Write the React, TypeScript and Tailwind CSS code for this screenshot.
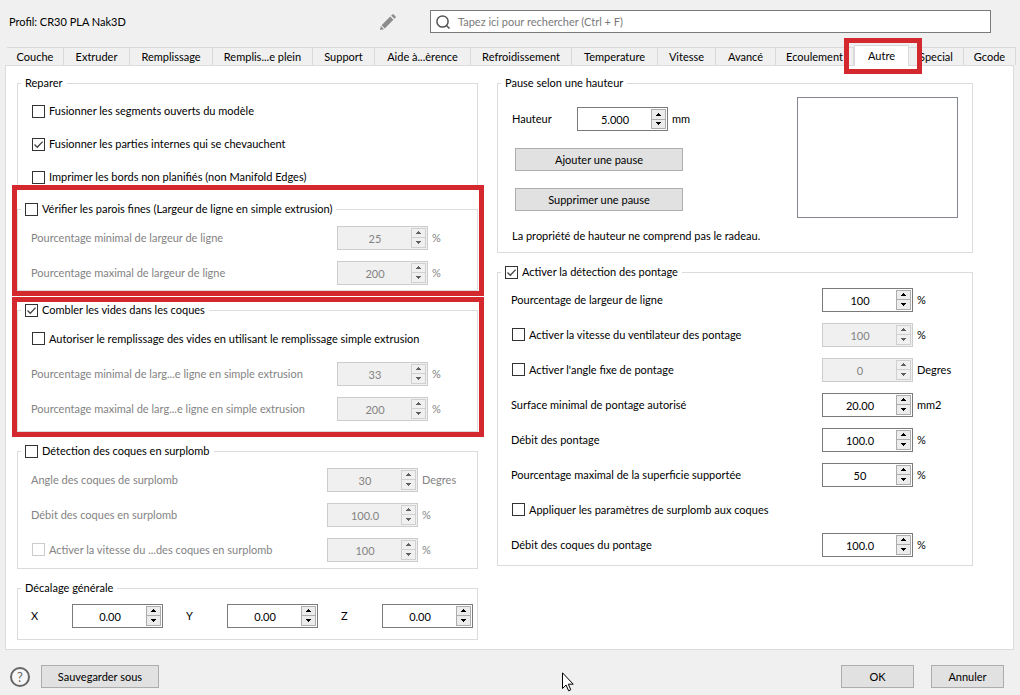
import React, { useState } from 'react';

interface SpinBoxProps {
  label: string;
  value: string;
  disabled?: boolean;
}

interface CheckProps {
  label: string;
  checked?: boolean;
  disabled?: boolean;
}

interface GroupProps {
  title: React.ReactNode;
  className?: string;
  children: React.ReactNode;
}

interface RowProps {
  label: string;
  value: string;
  unit: string;
  unitClass: string;
  check?: boolean;
  disabled?: boolean;
  boxDisabled?: boolean;
}

const TABS = [
  { name: 'Couche', width: 'w-[57px]' },
  { name: 'Extruder', width: 'w-[66px]' },
  { name: 'Remplissage', width: 'w-[83px]' },
  { name: 'Remplis...e plein', width: 'w-[100px]' },
  { name: 'Support', width: 'w-[62px]' },
  { name: 'Aide à...èrence', width: 'w-[96px]' },
  { name: 'Refroidissement', width: 'w-[101px]' },
  { name: 'Temperature', width: 'w-[86px]' },
  { name: 'Vitesse', width: 'w-[58px]' },
  { name: 'Avancé', width: 'w-[60px]' },
  { name: 'Ecoulement', width: 'w-[78px]' },
  { name: 'Autre', width: 'w-[55px]' },
  { name: 'Special', width: 'w-[55px]' },
  { name: 'Gcode', width: 'w-[52px]' },
];

const SpinBox: React.FC<SpinBoxProps> = ({ label, value, disabled }) => {
  const [text, setText] = useState(value);
  const decimals = value.includes('.') ? value.split('.')[1].length : 0;

  const step = (delta: number) => setText((parseFloat(text) + delta).toFixed(decimals));

  const frame = disabled ? 'border-[#cccccc] bg-[#f0f0f0] text-[#838383]' : 'border-[#7a7a7a] bg-white text-black';
  const arrow = `flex flex-1 items-center justify-center border ${
    disabled ? 'border-[#d0d0d0] bg-[#f0f0f0] text-[#606060]' : 'border-[#acacac] bg-[#ececec] text-black'
  }`;

  return (
    <div className={`flex h-6 w-[91px] shrink-0 border p-px ${frame}`}>
      <input
        type="text"
        aria-label={label}
        value={text}
        disabled={disabled}
        onChange={e => setText(e.target.value)}
        className="min-w-0 flex-1 pt-0.5 text-center outline-none"
      />
      <div className="flex w-[15px] flex-col">
        <button type="button" aria-label={`${label} +`} disabled={disabled} onClick={() => step(1)} className={arrow}>
          <svg width="5" height="3" viewBox="0 0 5 3" fill="currentColor"><path d="M2 0h1v1h1v1h1v1H0V2h1V1h1z" /></svg>
        </button>
        <button type="button" aria-label={`${label} -`} disabled={disabled} onClick={() => step(-1)} className={`${arrow} -mt-px`}>
          <svg width="5" height="3" viewBox="0 0 5 3" fill="currentColor"><path d="M0 0h5v1H4v1H3v1H2V2H1V1H0z" /></svg>
        </button>
      </div>
    </div>
  );
};

const Check: React.FC<CheckProps> = ({ label, checked, disabled }) => (
  <label className={`flex items-center gap-1 whitespace-nowrap ${disabled ? 'text-[#838383]' : ''}`}>
    <span className="relative flex">
      <input
        type="checkbox"
        defaultChecked={checked}
        disabled={disabled}
        className="peer size-[13px] appearance-none border border-[#333333] bg-white disabled:border-[#cccccc]"
      />
      <svg
        viewBox="0 0 13 13"
        className="pointer-events-none absolute inset-0 hidden size-[13px] peer-checked:block"
        fill="none"
        stroke="#444444"
        strokeWidth="1.3"
      >
        <path d="M2.5 6.5l2.8 2.8L10.6 3.6" />
      </svg>
    </span>
    {label}
  </label>
);

const Group: React.FC<GroupProps> = ({ title, className = '', children }) => (
  <fieldset className={`min-w-0 border border-[#dcdcdc] ${className}`}>
    <legend className="ml-[3px] px-1">{title}</legend>
    {children}
  </fieldset>
);

const Row: React.FC<RowProps> = ({ label, value, unit, unitClass, check, disabled, boxDisabled }) => (
  <div className={`flex h-[35px] items-center ${check ? 'pl-3.5' : 'pl-[13px]'} ${disabled ? 'text-[#838383]' : ''}`}>
    <div className="min-w-0 flex-1 whitespace-nowrap">
      {check ? <Check label={label} disabled={disabled} /> : label}
    </div>
    <SpinBox label={label} value={value} disabled={disabled || boxDisabled} />
    <span className={`pl-1 ${unitClass}`}>{unit}</span>
  </div>
);

const PushButton: React.FC<{ className: string; children: React.ReactNode }> = ({ className, children }) => (
  <button type="button" className={`h-[23px] border border-[#adadad] bg-[#e1e1e1] hover:border-[#0078d7] ${className}`}>
    {children}
  </button>
);

const App: React.FC = () => {
  const [tab, setTab] = useState('Autre');

  return (
    <div className="relative flex min-h-screen flex-col bg-[#f0f0f0] font-['Lato','Liberation_Sans',sans-serif] text-[11px] leading-4 text-black">
      {/* Profile name and search */}
      <header className="flex h-[45px] items-start pt-2.5 pr-[29px]">
        <div className="flex h-6 w-[430px] shrink-0 items-center justify-between pl-[9px]">
          <span>Profil: CR30 PLA Nak3D</span>
          <button type="button" aria-label="Renommer" className="mr-[33px]">
            <svg width="18" height="18" viewBox="0 0 18 18" fill="#8c8c8c">
              <path d="M1 17l.8-4 3.200 3.200zM2.600 12.200l8.600-8.600 3.200 3.200-8.600 8.600zM12.200 2.600l1.100-1.100Q14 .900 14.700 1.500l1.800 1.800q.600.700 0 1.400l-1.100 1.100z" />
            </svg>
          </button>
        </div>
        <label className="flex h-[23px] min-w-0 flex-1 items-center gap-2 border border-[#7a7a7a] bg-white pl-[5px]">
          <svg width="14" height="14" viewBox="0 0 14 14" fill="none" stroke="#555555" strokeWidth="1.5">
            <circle cx="6.500" cy="6.500" r="5.600" />
            <path d="M10.200 10.200l3.300 3.300" />
          </svg>
          <input
            type="text"
            aria-label="Rechercher"
            placeholder="Tapez ici pour rechercher (Ctrl + F)"
            className="min-w-0 flex-1 outline-none placeholder:text-[#7a7a7a]"
          />
        </label>
      </header>

      {/* Tabs */}
      <nav role="tablist" className="flex h-5 items-end pr-1 pl-[7px]">
        {TABS.map(t => (
          <div key={t.name} className={`relative ${t.width}`}>
            <button
              type="button"
              role="tab"
              aria-selected={tab === t.name}
              onClick={() => setTab(t.name)}
              className={`block w-full border-t border-r border-[#d9d9d9] whitespace-nowrap ${
                tab === t.name ? 'h-[21px] -mb-px border-l bg-white' : 'h-[18px] bg-[#f0f0f0]'
              }`}
            >
              {t.name}
            </button>
            {t.name === 'Autre' && (
              <div className="pointer-events-none absolute -top-[7px] -right-[13px] -bottom-[9px] -left-[10px] z-10 border-[5px] border-[#d4282f]" />
            )}
          </div>
        ))}
      </nav>

      <main className="mr-1.5 ml-[5px] grid flex-1 grid-cols-[461fr_476fr] items-start gap-x-[19px] border border-[#dcdcdc] bg-white pt-[9px] pr-10 pb-2 pl-[11px]">
        {/* Left column */}
        <div className="flex min-w-0 flex-col gap-[11px]">
          <Group title="Reparer" className="pb-1">
            <div className="flex flex-col gap-[17px] pt-3 pl-3.5">
              <div className="h-4"><Check label="Fusionner les segments ouverts du modèle" /></div>
              <div className="h-4"><Check label="Fusionner les parties internes qui se chevauchent" checked /></div>
              <div className="h-4"><Check label="Imprimer les bords non planifiés (non Manifold Edges)" /></div>
            </div>
          </Group>

          <div className="relative">
            <Group title={<Check label="Vérifier les parois fines (Largeur de ligne en simple extrusion)" />} className="pt-[3px]">
              <Row label="Pourcentage minimal de largeur de ligne" value="25" unit="%" unitClass="w-[49px]" disabled />
              <Row label="Pourcentage maximal de largeur de ligne" value="200" unit="%" unitClass="w-[49px]" disabled />
            </Group>
            <div className="pointer-events-none absolute -top-4 -right-1.5 -bottom-[5px] -left-[5px] border-[5px] border-[#d4282f]" />
          </div>

          <div className="relative">
            <Group title={<Check label="Combler les vides dans les coques" checked />} className="pt-[3px] pb-[5px]">
              <div className="flex h-[35px] items-center pl-3.5">
                <Check label="Autoriser le remplissage des vides en utilisant le remplissage simple extrusion" />
              </div>
              <Row label="Pourcentage minimal de larg...e ligne en simple extrusion" value="33" unit="%" unitClass="w-[49px]" disabled />
              <Row label="Pourcentage maximal de larg...e ligne en simple extrusion" value="200" unit="%" unitClass="w-[49px]" disabled />
            </Group>
            <div className="pointer-events-none absolute -top-[5px] -right-1.5 -bottom-[5px] -left-[5px] border-[5px] border-[#d4282f]" />
          </div>

          <Group title={<Check label="Détection des coques en surplomb" />} className="pt-[3px] pb-px">
            <Row label="Angle des coques de surplomb" value="30" unit="Degres" unitClass="w-[59px]" disabled />
            <Row label="Débit des coques en surplomb" value="100.0" unit="%" unitClass="w-[59px]" disabled />
            <Row label="Activer la vitesse du ...des coques en surplomb" value="100" unit="%" unitClass="w-[59px]" check disabled />
          </Group>

          <Group title="Décalage générale" className="pt-0.5 pb-1.5">
            <div className="flex h-[35px] items-center justify-between pr-1 pl-[13px]">
              {['X', 'Y', 'Z'].map(axis => (
                <div key={axis} className="flex items-center">
                  <span className="w-[41px]">{axis}</span>
                  <SpinBox label={axis} value="0.00" />
                </div>
              ))}
            </div>
          </Group>
        </div>

        {/* Right column */}
        <div className="flex min-w-0 flex-col gap-[11px]">
          <Group title="Pause selon une hauteur" className="pb-2">
            <div className="flex justify-between pr-3.5 pl-3.5">
              <div className="flex flex-col gap-[17px] pt-4">
                <div className="flex items-center">
                  <span className="w-[65px]">Hauteur</span>
                  <SpinBox label="Hauteur" value="5.000" />
                  <span className="pl-1">mm</span>
                </div>
                <PushButton className="ml-[3px] w-[168px]">Ajouter une pause</PushButton>
                <PushButton className="ml-[3px] w-[168px]">Supprimer une pause</PushButton>
                <p className="whitespace-nowrap">La propriété de hauteur ne comprend pas le radeau.</p>
              </div>
              <div role="listbox" aria-label="Pauses" className="mt-1.5 h-[121px] w-[161px] border border-[#828790] bg-white" />
            </div>
          </Group>

          <Group title={<Check label="Activer la détection des pontage" checked />} className="pt-0.5 pb-[3px]">
            <Row label="Pourcentage de largeur de ligne" value="100" unit="%" unitClass="w-[59px]" />
            <Row label="Activer la vitesse du ventilateur des pontage" value="100" unit="%" unitClass="w-[59px]" check boxDisabled />
            <Row label="Activer l'angle fixe de pontage" value="0" unit="Degres" unitClass="w-[59px]" check boxDisabled />
            <Row label="Surface minimal de pontage autorisé" value="20.00" unit="mm2" unitClass="w-[59px]" />
            <Row label="Débit des pontage" value="100.0" unit="%" unitClass="w-[59px]" />
            <Row label="Pourcentage maximal de la superficie supportée" value="50" unit="%" unitClass="w-[59px]" />
            <div className="flex h-[35px] items-center pl-3.5">
              <Check label="Appliquer les paramètres de surplomb aux coques" />
            </div>
            <Row label="Débit des coques du pontage" value="100.0" unit="%" unitClass="w-[59px]" />
          </Group>
        </div>
      </main>

      {/* Dialog buttons */}
      <footer className="flex items-center pt-[15px] pr-4 pb-[7px] pl-2.5">
        <button type="button" aria-label="Aide" className="mr-[11px] flex size-5 items-center justify-center rounded-full border-2 border-[#666666] bg-[#f7f7f7] text-[13px] text-[#666666]">
          ?
        </button>
        <PushButton className="w-[118px]">Sauvegarder sous</PushButton>
        <PushButton className="mr-[17px] ml-auto w-[73px]">OK</PushButton>
        <PushButton className="w-[73px]">Annuler</PushButton>
      </footer>

      {/* Mouse pointer */}
      <svg className="pointer-events-none absolute bottom-[3px] left-[562px]" width="12" height="20" viewBox="0 0 12 20">
        <path d="M.5.800v15.700l3.600-3.500 2.500 5.800 2.200-1-2.500-5.600h4.900z" fill="#ffffff" stroke="#000000" />
      </svg>
    </div>
  );
};

export default App;
